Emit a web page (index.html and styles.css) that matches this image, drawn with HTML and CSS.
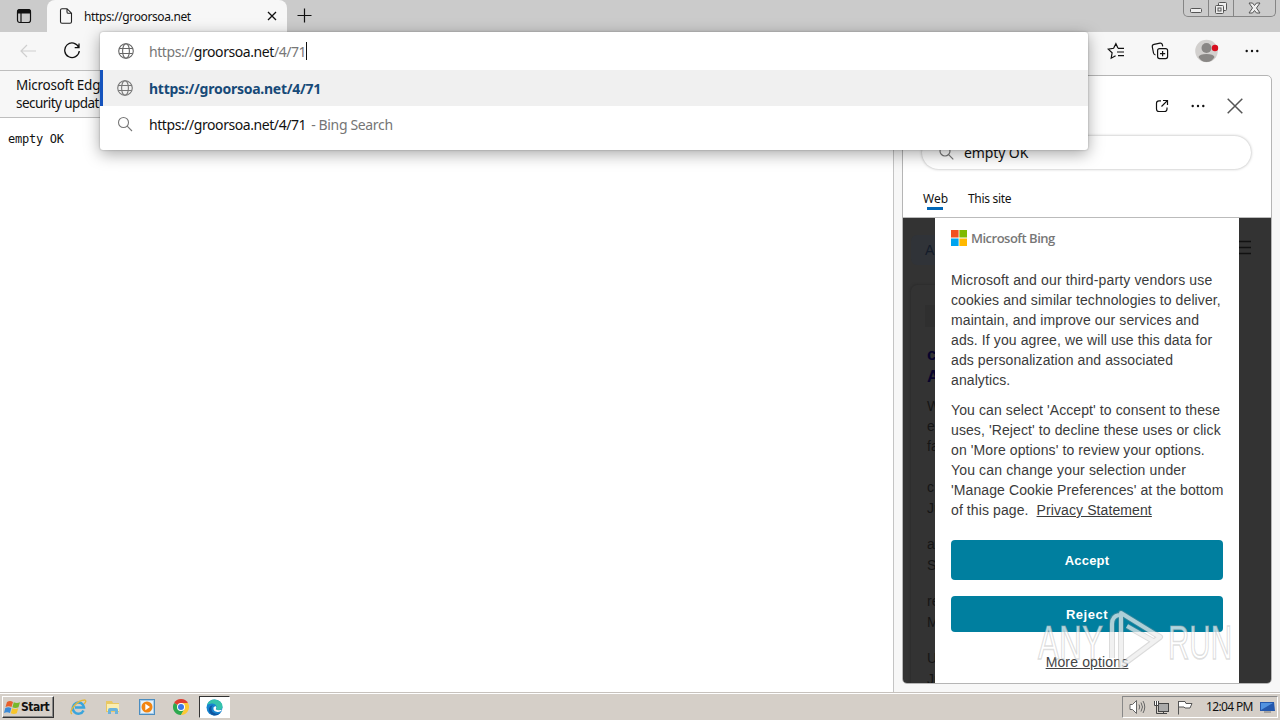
FILE: index.html
```html
<!DOCTYPE html>
<html lang="en">
<head>
<meta charset="utf-8">
<title>groorsoa.net</title>
<link rel="stylesheet" href="styles.css">
</head>
<body>
<div class="desktop">
  <header class="tabstrip">
    <svg class="tab-actions" width="16" height="16" viewBox="0 0 16 16"><rect x="1.500" y="1.500" width="13" height="13" rx="2.200" fill="none" stroke="#111" stroke-width="1.200"/><path d="M1 5.500V4Q1 1 4 1h8Q15 1 15 4v1.500z" fill="#111"/><path d="M5 5v9" stroke="#111" stroke-width="1.200"/></svg>
    <div class="tab">
      <svg width="14" height="16" viewBox="0 0 14 16" fill="none" stroke="#222" stroke-width="1.1"><path d="M3 .7h5l4.500 4.500v8.600q0 1.500-1.500 1.500H3q-1.500 0-1.500-1.500V2.200Q1.500.7 3 .7zM8 .9v3q0 1.400 1.400 1.400h3"/></svg>
      <span class="tab-title">https://groorsoa.net</span>
      <svg class="tab-close" width="10" height="10" viewBox="0 0 10 10"><path d="M1 1l8 8M9 1L1 9" stroke="#111" stroke-width="1.3"/></svg>
    </div>
    <svg class="new-tab" width="15" height="15" viewBox="0 0 15 15"><path d="M7.500 .5v14M.5 7.500h14" stroke="#111" stroke-width="1.200"/></svg>
    <div class="win-controls">
      <span class="wc wc-min"><svg width="14" height="16" viewBox="0 0 14 16"><rect x="1.500" y="8.500" width="11" height="4" rx="1" fill="#eee" stroke="#555"/></svg></span>
      <span class="wc wc-max"><svg width="14" height="15" viewBox="0 0 14 15" fill="#eee" stroke="#555"><rect x="4.500" y="1.500" width="8" height="8" rx="1"/><rect x="1.500" y="4.500" width="8" height="8" rx="1"/><rect x="4" y="7" width="3" height="3"/></svg></span>
      <span class="wc wc-close"><svg width="13" height="12" viewBox="0 0 13 12"><path d="M1 1h3.500l2 2.500 2-2.500H12L8.500 6l3.500 5H8.500l-2-2.500-2 2.500H1l3.500-5z" fill="#eee" stroke="#555"/></svg></span>
    </div>
  </header>
  <div class="toolbar">
    <svg class="back" width="16" height="14" viewBox="0 0 16 14"><path d="M16 7H1M7 1L1 7l6 6" fill="none" stroke="#cfcfcf" stroke-width="1.200"/></svg>
    <svg class="reload" width="18" height="18" viewBox="0 0 18 18" fill="none" stroke="#111" stroke-width="1.300"><path d="M15.800 5.500A7.300 7.300 0 1 0 16.300 9M16 1.500v4.200h-4.300"/></svg>
    <div class="tools">
      <svg width="18" height="18" viewBox="0 0 18 18" fill="none" stroke="#111" stroke-width="1.200"><path d="M11 6.200L8.900 1.700 6.600 6.300 1.200 7.100l3.900 3.700-.9 5.400 4.400-2.400M11 6.300h6M10 10h7M11 13.700h6"/></svg>
      <svg width="18" height="18" viewBox="0 0 18 18" fill="none" stroke="#111" stroke-width="1.200"><rect x="6.600" y="6.600" width="10" height="10" rx="2"/><path d="M11.600 9v5.200M9 11.600h5.200M4.500 13Q2.800 12.500 2.500 11L1.300 4.800Q1 2.800 3 2.400l6-1.200q2-.4 2.400 1.600l.3 1.500"/></svg>
      <svg class="avatar" width="24" height="24" viewBox="0 0 24 24"><circle cx="11.500" cy="12" r="11.300" fill="#d2d0ce"/><circle cx="11.500" cy="9" r="5" fill="#898785"/><path d="M3.500 18q1-3 8-3t8 3q-2.500 5-8 5t-8-5z" fill="#898785"/><circle cx="20" cy="9" r="3.200" fill="#d80f1f"/></svg>
      <svg width="14" height="4" viewBox="0 0 14 4"><g fill="#111"><circle cx="1.700" cy="2" r="1.200"/><circle cx="7" cy="2" r="1.200"/><circle cx="12.300" cy="2" r="1.200"/></g></svg>
    </div>
  </div>
  <div class="content">
    <main class="page">
      <div class="notice"><span>Microsoft Edg</span><span class="n2">security updat</span></div>
      <pre class="doc">empty OK</pre>
    </main>
    <aside class="side">
      <div class="panel">
        <div class="panel-actions">
          <svg width="14" height="14" viewBox="0 0 14 14" fill="none" stroke="#111" stroke-width="1.200"><path d="M6 1.800H4Q1.500 1.800 1.500 4.300V10q0 2.500 2.500 2.500h5.500q2.500 0 2.500-2.500V8.500M8 1.500h4.500V6M12.300 1.700L6.500 7.500"/></svg>
          <svg width="14" height="4" viewBox="0 0 14 4"><g fill="#111"><circle cx="1.700" cy="2" r="1.200"/><circle cx="7" cy="2" r="1.200"/><circle cx="12.300" cy="2" r="1.200"/></g></svg>
          <svg width="16" height="16" viewBox="0 0 16 16"><path d="M.7.7l14.600 14.600M15.300.7L.7 15.300" stroke="#555" stroke-width="1.500"/></svg>
        </div>
        <div class="panel-search">
          <svg width="15" height="15" viewBox="0 0 15 15" fill="none" stroke="#777" stroke-width="1.200"><circle cx="6" cy="6" r="5"/><path d="M9.600 9.600l4.700 4.700"/></svg>
          <span class="panel-query">empty OK</span>
        </div>
        <nav class="panel-tabs"><span class="ptab active">Web</span><span class="ptab site">This site</span></nav>
        <div class="results">
          <div class="dim">
            <span class="chip">A</span>
            <div class="card">
              <div class="thumb"></div>
              <b class="navy">c</b><b class="navy">A</b>
              <span class="r3">W</span><span class="r4">e</span><span class="r4">fa</span>
              <span class="r5">c</span><span class="r6">Ju</span>
              <span class="r7">a</span><span class="r6">S</span>
              <span class="r7">re</span><span class="r6">M</span>
              <span class="r7">U</span><span class="r6">Ju</span>
            </div>
          </div>
          <section class="consent">
            <div class="brand"><svg width="16" height="16" viewBox="0 0 16 16"><path fill="#f25022" d="M0 0h7.600v7.600H0z"/><path fill="#7fba00" d="M8.400 0H16v7.600H8.400z"/><path fill="#00a4ef" d="M0 8.400h7.600V16H0z"/><path fill="#ffb900" d="M8.400 8.400H16V16H8.400z"/></svg><span class="brand-name">Microsoft Bing</span></div>
            <p class="copy"><span class="wide">Microsoft and our third-party vendors use</span><span>cookies and similar technologies to deliver,</span><span>maintain, and improve our services and</span><span>ads. If you agree, we will use this data for</span><span>ads personalization and associated</span><span>analytics.</span></p>
            <p class="copy"><span>You can select 'Accept' to consent to these</span><span>uses, 'Reject' to decline these uses or click</span><span>on 'More options' to review your options.</span><span class="wide">You can change your selection under</span><span>'Manage Cookie Preferences' at the bottom</span><span>of this page. &nbsp;<u>Privacy Statement</u></span></p>
            <div class="btn accept">Accept</div>
            <div class="btn reject">Reject</div>
            <u class="more">More options</u>
          </section>
          <div class="menu-side"><svg width="12" height="15" viewBox="0 0 12 15"><path d="M0 1.500h12M0 7.500h12M0 13.500h12" stroke="#111" stroke-width="1.500"/></svg></div>
        </div>
      </div>
    </aside>
  </div>
  <footer class="taskbar">
    <div class="start"><svg width="17" height="17" viewBox="0 0 17 17"><path d="M3 3q3-2 6 0L7.500 8q-3-1.500-6 0z" fill="#e8602c"/><path d="M9.800 3.200q3 1.600 6.200 0L14.500 8.200q-3 1.600-6.100 0z" fill="#77b82a"/><path d="M1.300 9q3-1.600 6 0L6 14q-3-1.600-6 0z" fill="#3c8bd8"/><path d="M8.200 9.300q3 1.600 6 0l-1.400 5q-3 1.600-6 0z" fill="#f7c52b"/></svg><span class="start-text">Start</span></div>
    <div class="launch">
      <svg width="17" height="16" viewBox="0 0 17 16" fill="none"><path d="M13.500 11.500A5.600 5.600 0 1 1 14 8.500H5" stroke="#3aa5dc" stroke-width="2.500"/><path d="M2 15Q-1 13 4 7T15 1q2 1-1 4" stroke="#e5b839" stroke-width="1.300"/></svg>
      <svg width="16" height="16" viewBox="0 0 16 16"><path d="M1 2h6l1 2h6v9H1z" fill="#e9c863"/><path d="M2 5h12v7H2z" fill="#fbeeb0"/><path d="M3 15v-4q0-2 2-2h6q2 0 2 2v4h-3v-3H6v3z" fill="#6bb3dc"/></svg>
      <svg width="16" height="16" viewBox="0 0 16 16"><rect x=".5" y=".5" width="15" height="15" fill="#a9cdea" stroke="#4b8dc0"/><rect x="2" y="2" width="12" height="12" fill="#e4f2fb"/><circle cx="8" cy="8" r="5.500" fill="#f28511"/><path d="M6.300 4.800L11 8l-4.700 3.200z" fill="#fff"/></svg>
      <svg width="16" height="16" viewBox="0 0 16 16"><path d="M8 8L1.070 4A8 8 0 0 1 14.930 4z" fill="#df3e30"/><path d="M8 8L1.070 4A8 8 0 0 0 8 16l3.460-6z" fill="#2da94f"/><path d="M8 8l3.460 2L8 16A8 8 0 0 0 14.930 4H8z" fill="#fcc934"/><circle cx="8" cy="8" r="4" fill="#fff"/><circle cx="8" cy="8" r="3" fill="#3b78e7"/></svg>
    </div>
    <div class="task"><svg width="17" height="17" viewBox="0 0 17 17"><circle cx="8.500" cy="8.500" r="8" fill="#1684cf"/><path d="M1 6Q3 .5 8.500.5q7.500.5 8 7 0 4-5 3.500-2 0-1-1.500Q11 5 6.500 4.500 3 4.300 1 6z" fill="#35c3ac"/><path d="M5.500 8q-1 5 4 6.500 3 .8 5.500-1-3 3.500-7.500 3-5-2-4.500-7Q4 6 7 6.500 5.800 7 5.500 8z" fill="#10559f"/><path d="M9.500 7q1.500 1.500.3 3.200 1 1.600 6.500.6-2.500 3-5.700 2-4-1-3-4.600z" fill="#fff"/></svg></div>
    <div class="tray">
      <svg class="t-sound" width="17" height="14" viewBox="0 0 17 14" fill="#fff" stroke="#666"><path d="M1 4.500h2.500l4-4v13l-4-4H1z"/><path d="M10 4.500q1.500 2.500 0 5M12 2.500q3 4.500 0 9M14 1q3.500 6 0 12" fill="none"/></svg>
      <svg class="t-net" width="16" height="15" viewBox="0 0 16 15" stroke="#444"><rect x="5.500" y="3.500" width="10" height="8" fill="#aaa"/><path d="M7 13.500h7M10.500 11.500v2M3.500 6v7.500H7" fill="none"/><path d="M1.500 1v4.500h4V1M3.500 1v4" fill="#fff"/></svg>
      <svg class="t-flag" width="16" height="15" viewBox="0 0 16 15"><path d="M1.500 1v13.500M2 1.500h6l1 2h6l-2 4.500H8L7 7H2" fill="#fff" stroke="#555"/></svg>
      <span class="clock">12:04 PM</span>
      <svg class="t-desk" width="15" height="13" viewBox="0 0 15 13"><path d="M0 1h14l1 9H0z" fill="#2458ad"/><path d="M1 2h12L1 9z" fill="#5192e0"/><path d="M4 11h7" stroke="#777"/></svg>
    </div>
  </footer>

  <div class="omnibox">
    <div class="orow input"><svg class="globe" width="16" height="16" viewBox="0 0 16 16"><g fill="none" stroke="#666" stroke-width="1.100"><circle cx="8" cy="8" r="7.300"/><ellipse cx="8" cy="8" rx="3.400" ry="7.300"/><path d="M1.300 5.500h13.400M1.300 10.500h13.400"/></g></svg><span class="url"><i>https://</i>groorsoa.net<i>/4/71</i></span><span class="caret"></span></div>
    <div class="orow selected"><svg class="globe" width="16" height="16" viewBox="0 0 16 16"><g fill="none" stroke="#777" stroke-width="1.100"><circle cx="8" cy="8" r="7.300"/><ellipse cx="8" cy="8" rx="3.400" ry="7.300"/><path d="M1.300 5.500h13.400M1.300 10.500h13.400"/></g></svg><b class="match">https://groorsoa.net/4/71</b></div>
    <div class="orow"><svg class="globe" width="16" height="16" viewBox="0 0 16 16" fill="none" stroke="#777" stroke-width="1.100"><circle cx="6.500" cy="6.500" r="5"/><path d="M10.200 10.200l4.800 4.800"/></svg><span class="url">https://groorsoa.net/4/71</span><span class="bing">- Bing Search</span></div>
  </div>

  <svg class="watermark" width="200" height="70" viewBox="0 0 200 70">
    <g class="wm-text"><text x="3" y="53" textLength="65" lengthAdjust="spacingAndGlyphs">ANY</text><text x="133" y="53" textLength="64" lengthAdjust="spacingAndGlyphs">RUN</text></g>
    <g class="wm-edge"><path d="M77 52V18q0-8 7-9M86 7l39 24-39 29zM92 20l28 16"/></g>
    <g class="wm-mark"><path d="M77 52V18q0-8 7-9M86 7l39 24-39 29zM92 20l28 16"/></g>
  </svg>
</div>
</body>
</html>
```
FILE: styles.css
```css
* { box-sizing: border-box; }
body { margin: 0; font-family: "Noto Sans", sans-serif; color: #111; }
svg { display: block; flex: none; }
span { white-space: pre; }
.desktop { position: relative; width: 1280px; height: 720px; overflow: hidden; display: flex; flex-direction: column; background: #fff; }
.tabstrip { height: 32px; background: #cbcbcb; display: flex; align-items: flex-start; }
.tab-actions { margin: 8px 7px 0 16px; }
.tab { width: 240px; height: 32px; margin-left: 8px; background: #f7f7f7; border-radius: 8px 8px 0 0; display: flex; align-items: center; padding-left: 12px; }
.tab-title { font-size: 12px; width: 108px; margin-left: 11px; letter-spacing: -.38px; }
.tab-close { margin-left: 75px; }
.new-tab { margin: 8px 0 0 10px; }
.win-controls { margin: 0 4px 0 auto; display: flex; height: 17px; border: 1px solid #858585; border-top: 0; border-radius: 0 0 5px 5px; }
.wc { display: flex; align-items: center; justify-content: center; width: 25px; border-right: 1px solid #858585; }
.wc-close { width: 41px; border: 0; }
.toolbar { height: 38px; background: #f7f7f7; display: flex; align-items: center; }
.back { margin-left: 20px; }
.reload { margin-left: 27px; }
.tools { margin: 0 21px 0 auto; display: flex; align-items: center; gap: 26px; }
.content { height: 622px; display: flex; }
.page { width: 894px; border-right: 1px solid #c4c4c4; background: #fff; }
.notice { height: 48px; border-top: 1px solid #bebebe; border-bottom: 1px solid #bebebe; background: #f7f7f7; padding: 5px 0 0 16px; display: flex; flex-direction: column; font-size: 13.500px; line-height: 18px; letter-spacing: -.25px; }
.n2 { letter-spacing: -.55px; }
.doc { margin: 14px 0 0 8px; font: 12px/15px "DejaVu Sans Mono", monospace; letter-spacing: -.25px; }
.side { flex: 1; background: #f7f7f7; padding: 5px 8px 8px; }
.panel { width: 370px; height: 609px; border: 1px solid #b5b5b5; border-radius: 5px; background: #fff; overflow: hidden; display: flex; flex-direction: column; }
.panel-actions { height: 60px; flex: none; display: flex; align-items: center; justify-content: flex-end; gap: 22px; padding-right: 28px; }
.panel-search { width: 329px; height: 33px; flex: none; margin-left: 19px; border-radius: 17px; box-shadow: 0 0 3px #aaa; display: flex; align-items: center; padding-left: 17px; }
.panel-query { margin-left: 10px; font-size: 14px; letter-spacing: -.1px; }
.panel-tabs { height: 49px; flex: none; border-bottom: 1px solid #bbb; display: flex; padding: 21px 0 0 20px; font-size: 12px; line-height: 18px; gap: 20px; }
.ptab { height: 20px; letter-spacing: -.3px; }
.active { width: 25px; display: flex; flex-direction: column; letter-spacing: 0; }
.active::after { content: ""; width: 16px; height: 3px; margin: -1px 0 0 4px; background: #0067b8; flex: none; }
.results { flex: 1; min-height: 0; background: #333; display: flex; }
.dim { width: 32px; overflow: hidden; padding: 17px 0 0 8px; }
.chip { display: block; width: 60px; height: 30px; padding-left: 14px; border-radius: 6px; background: #303338; color: #141c2a; font: 14px/30px "Liberation Sans", sans-serif; }
.card { display: flex; flex-direction: column; width: 60px; height: 420px; margin-top: 20px; padding: 20px 0 0 16px; border-radius: 6px; box-shadow: 0 0 3px #252525; font: 14px/20px "Liberation Sans", sans-serif; color: #161616; }
.thumb { height: 22px; margin: 0 0 17px -2px; background: #2f2f2f; flex: none; }
.navy { font-size: 17px; line-height: 22px; color: #09052c; }
.r3 { margin-top: 8px; }
.r5 { margin-top: 21px; }
.r6 { line-height: 22px; }
.r7 { margin-top: 15px; }
.consent { width: 304px; background: #fff; padding: 12px 16px 0; display: flex; flex-direction: column; font-family: "Liberation Sans", sans-serif; }
.brand { height: 16px; display: flex; align-items: center; gap: 4px; margin-bottom: 24px; }
.brand-name { font: 600 13px/16px "Open Sans", sans-serif; letter-spacing: -.5px; color: #777; }
.copy { margin: 0 0 10px; display: flex; flex-direction: column; align-items: flex-start; font-size: 14px; line-height: 20px; color: #3b3b3b; letter-spacing: .1px; }
.wide { letter-spacing: .15px; }
.btn { height: 40px; border-radius: 4px; background: #007f9f; color: #fff; display: flex; align-items: center; justify-content: center; font-size: 13px; font-weight: 700; letter-spacing: .2px; flex: none; }
.accept { margin-top: 10px; }
.reject { height: 36px; margin-top: 16px; letter-spacing: .5px; }
.more { margin-top: 20px; text-align: center; font-size: 14px; line-height: 20px; color: #444; letter-spacing: .15px; }
.menu-side { flex: 1; padding-top: 22px; }
.taskbar { height: 28px; background: #d5cfc8; border-top: 1px solid #c7c2bd; box-shadow: inset 0 1px #fff; display: flex; align-items: flex-start; padding-top: 3px; }
.start { width: 52px; height: 22px; margin-left: 2px; border: 1px solid; border-color: #fff #333 #333 #fff; box-shadow: inset -1px -1px #888; display: flex; align-items: center; padding-left: 1px; }
.start-text { font: 700 12px/18px "DejaVu Sans Condensed", sans-serif; letter-spacing: -.5px; }
.launch { display: flex; gap: 18px; margin: 3px 0 0 16px; }
.task { width: 31px; height: 22px; margin-left: 10px; background: #fff; border: 1px solid; border-color: #333 #fff #fff #333; display: flex; align-items: center; justify-content: center; }
.tray { width: 156px; height: 22px; margin: 0 2px 0 auto; border: 1px solid; border-color: #888 #fff #fff #888; display: flex; align-items: center; padding-left: 6px; }
.t-net { margin-left: 7px; }
.t-flag { margin-left: 8px; }
.clock { margin-left: 13px; width: 47px; font: 12px/18px "Noto Sans", sans-serif; letter-spacing: -.65px; }
.t-desk { margin-left: 7px; }
.omnibox { position: absolute; left: 100px; top: 32px; width: 988px; height: 118px; background: #fff; border-radius: 3px; box-shadow: 0 4px 16px rgba(0,0,0,.35), 0 0 2px rgba(0,0,0,.3); }
.orow { height: 36px; display: flex; align-items: center; padding-left: 17px; font-size: 14px; }
.input { height: 38px; padding-left: 18px; }
.selected { background: #f0f0f0; border-left: 3px solid #1553bd; padding-left: 14px; }
.url, .match { margin-left: 16px; letter-spacing: -.43px; }
.input .url { margin-left: 15px; }
.url i { font-style: normal; color: #777; }
.caret { width: 1px; height: 18px; background: #111; }
.match { color: #174a78; letter-spacing: -.26px; }
.bing { color: #757575; margin-left: 5px; letter-spacing: -.35px; }
.watermark { position: absolute; left: 1035px; top: 606px; }
.wm-text { font: 48px "Liberation Sans Narrow", "Liberation Sans", sans-serif; fill: #fff; fill-opacity: .7; stroke: #aaa; stroke-opacity: .4; stroke-width: 1.500; }
.wm-edge { fill: none; stroke: #999; stroke-opacity: .35; stroke-width: 6; stroke-linejoin: round; }
.wm-mark { fill: none; stroke: #fff; stroke-opacity: .6; stroke-width: 4; stroke-linejoin: round; }
```
